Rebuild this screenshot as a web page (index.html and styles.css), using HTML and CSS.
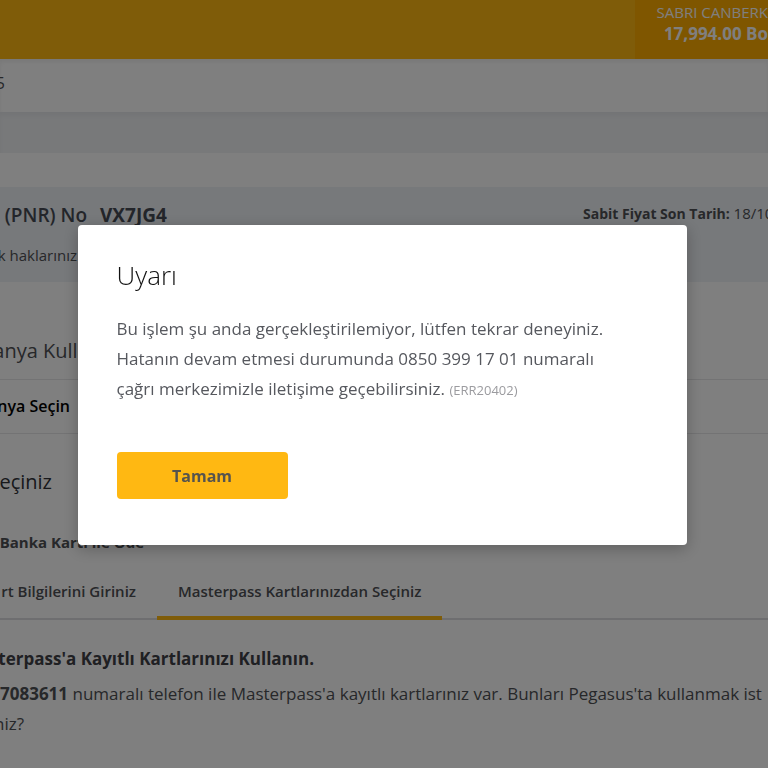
FILE: index.html
```html
<!DOCTYPE html>
<html lang="tr">
<head>
<meta charset="utf-8">
<title>Ödeme</title>
<link rel="stylesheet" href="styles.css">
</head>
<body>
<div class="page">
  <header class="topbar">
    <div class="account">
      <span class="account-name">SABRI CANBERK</span>
      <strong class="account-points">17,994.00 Bo</strong>
    </div>
  </header>
  <div class="step"><span class="lead step-lead">5</span></div>
  <div class="band"></div>
  <section class="booking">
    <div class="booking-row">
      <div class="pnr"><span class="lead pnr-lead">ı (PNR) No</span><strong>VX7JG4</strong></div>
      <div class="deadline"><b>Sabit Fiyat Son Tarih:</b> 18/10</div>
    </div>
    <p class="rights"><span class="lead rights-lead">k haklarınız</span></p>
  </section>
  <main>
    <h2 class="campaign"><span class="lead campaign-lead">anya Kullan</span></h2>
    <div class="campaign-select"><span class="lead select-lead">nya Seçin</span></div>
    <h2 class="payment"><span class="lead payment-lead">eçiniz</span></h2>
    <h3 class="method"><span class="lead method-lead">Banka Kartı ile Öde</span></h3>
    <nav class="tabs">
      <button class="tab tab-first" type="button">rt Bilgilerini Giriniz</button>
      <button class="tab tab-active" type="button">Masterpass Kartlarınızdan Seçiniz</button>
    </nav>
    <section class="saved">
      <h3><span class="lead saved-lead">terpass'a Kayıtlı Kartlarınızı Kullanın.</span></h3>
      <p><b>7083611</b> numaralı telefon ile Masterpass'a kayıtlı kartlarınız var. Bunları Pegasus'ta kullanmak ist<br><span class="lead end-lead">niz?</span></p>
    </section>
  </main>
</div>
<div class="overlay">
  <div class="dialog" role="dialog" aria-modal="true" aria-labelledby="dialog-title">
    <h1 id="dialog-title">Uyarı</h1>
    <p>Bu işlem şu anda gerçekleştirilemiyor, lütfen tekrar deneyiniz. Hatanın devam etmesi durumunda 0850 399 17 01 numaralı çağrı merkezimizle iletişime geçebilirsiniz. <small>(ERR20402)</small></p>
    <button class="confirm" type="button">Tamam</button>
  </div>
</div>
</body>
</html>
```
FILE: styles.css
```css
* { box-sizing: border-box; }
body {
  margin: 0;
  background: #fff;
  color: #4e5054;
  font-family: "Open Sans", "Noto Sans", sans-serif;
  font-size: 17px;
}
h1, h2, h3, p { margin: 0; }
button { font: inherit; color: inherit; border: 0; background: none; padding: 0; cursor: pointer; }

.page { height: 100vh; overflow: hidden; white-space: nowrap; }
/* Leading labels are right-aligned and run out past the left edge. */
.lead { display: flex; justify-content: flex-end; }

.topbar {
  display: flex;
  justify-content: flex-end;
  height: 59px;
  background: #ffb812;
}
.account {
  width: 133px;
  padding-top: 2px;
  background: #ffac00;
  color: #fff;
  text-align: right;
}
.account-name, .account-points { display: block; line-height: 21px; }
.account-name { font-size: 15px; }
.account-points { font-size: 17px; }

.step {
  height: 53px;
  font-size: 16px;
  line-height: 48px;
  box-shadow: inset 0 3px 4px rgba(0, 0, 0, 0.06);
}
.step-lead { width: 5px; }
.band {
  height: 41px;
  margin-bottom: 34px;
  background: #f0f2f5;
  box-shadow: inset 0 4px 4px rgba(0, 0, 0, 0.04);
}

.booking { height: 95px; padding-top: 13px; background: #eff2f6; }
.booking-row { display: flex; justify-content: space-between; line-height: 30px; }
.pnr { display: flex; gap: 13px; font-size: 19px; font-weight: 600; color: #464b54; }
.pnr strong { font-weight: 700; }
.pnr-lead { width: 87px; }
.deadline { width: 185px; font-size: 15px; line-height: 27px; }
.deadline b { font-size: 14px; font-weight: 700; }
.rights { padding-top: 13px; font-size: 15px; line-height: 24px; }
.rights-lead { width: 77px; }

h2 { font-size: 20px; line-height: 30px; font-weight: 400; }
.campaign { padding: 54px 0 13px; }
.campaign-lead { width: 101px; }
.campaign-select {
  border-top: 1px solid #e6e6e8;
  border-bottom: 1px solid #e6e6e8;
  color: #000;
  font-size: 16px;
  font-weight: 600;
  line-height: 53px;
}
.select-lead { width: 70px; }
.payment { padding-top: 33px; color: #303238; }
.payment-lead { width: 52px; }
.method { padding-top: 33px; font-size: 15px; line-height: 24px; }
.method-lead { width: 144px; }

.tabs {
  display: flex;
  margin-top: 13px;
  font-size: 15px;
  font-weight: 600;
  box-shadow: inset 0 -2px 0 #dcdde0;
}
.tab { height: 53px; padding: 0 21px 2px; border-bottom: 4px solid transparent; }
.tab-first { display: flex; justify-content: flex-end; align-items: center; width: 157px; }
.tab-active { border-color: #ffb812; }

.saved { padding-top: 24px; line-height: 30px; }
.saved h3 { padding-bottom: 5px; font-size: 17px; color: #3e4046; }
.saved-lead { width: 314px; }
.end-lead { width: 24px; }

.overlay {
  position: fixed;
  inset: 0;
  display: grid;
  place-items: center;
  padding: 2px 4px 0 0;
  background: rgba(0, 0, 0, 0.5);
}
.dialog {
  width: 80%;
  max-width: 609px;
  padding: 31px 39px 46px;
  border-radius: 4px;
  background: #fff;
  box-shadow: 0 4px 16px rgba(0, 0, 0, 0.25);
}
.dialog h1 { font-size: 26px; font-weight: 300; line-height: 38px; color: #111; }
.dialog p { max-width: 500px; padding: 20px 0 47px; line-height: 30px; color: #56585e; }
.dialog small { font-size: 13px; color: #9b9b9f; }
.confirm {
  display: block;
  width: 171px;
  height: 47px;
  border-radius: 4px;
  background: #ffb812;
  color: #56544e;
  font-size: 16px;
  font-weight: 700;
}
```
